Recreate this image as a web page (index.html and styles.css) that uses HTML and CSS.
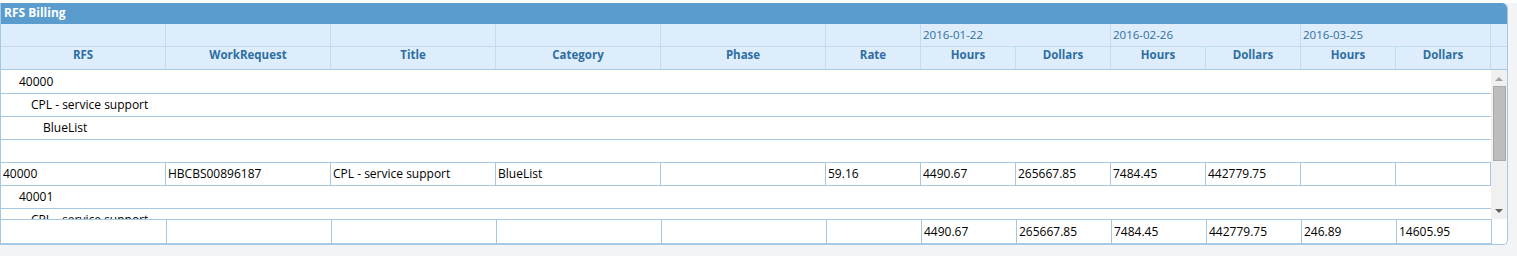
FILE: index.html
```html
<!DOCTYPE html>
<html>
<head>
<meta charset="utf-8">
<link rel="stylesheet" href="styles.css">
</head>
<body>
<div class="topstrip"></div>
<div class="panel">
  <div class="title">RFS Billing</div>
  <div class="head">
    <div class="hrow">
      <div class="hc"></div><div class="hc"></div><div class="hc"></div><div class="hc"></div><div class="hc"></div><div class="hc"></div>
      <div class="hc date span2">2016-01-22</div>
      <div class="hc date span2">2016-02-26</div>
      <div class="hc date span2">2016-03-25</div>
      <div class="hc filler"></div>
    </div>
    <div class="hrow">
      <div class="hc lbl">RFS</div><div class="hc lbl">WorkRequest</div><div class="hc lbl">Title</div><div class="hc lbl">Category</div><div class="hc lbl">Phase</div><div class="hc lbl">Rate</div>
      <div class="hc lbl">Hours</div><div class="hc lbl">Dollars</div>
      <div class="hc lbl">Hours</div><div class="hc lbl">Dollars</div>
      <div class="hc lbl">Hours</div><div class="hc lbl">Dollars</div>
      <div class="hc filler"></div>
    </div>
  </div>
  <div class="bodywrap">
    <div class="viewport">
      <div class="grp l1">40000</div>
      <div class="grp l2">CPL - service support</div>
      <div class="grp l3">BlueList</div>
      <div class="grp"></div>
      <div class="drow">
        <div class="dc">40000</div><div class="dc">HBCBS00896187</div><div class="dc">CPL - service support</div><div class="dc">BlueList</div><div class="dc"></div><div class="dc">59.16</div>
        <div class="dc">4490.67</div><div class="dc">265667.85</div><div class="dc">7484.45</div><div class="dc">442779.75</div><div class="dc"></div><div class="dc"></div>
      </div>
      <div class="grp l1">40001</div>
      <div class="grp l2">CPL - service support</div>
    </div>
    <div class="scrollbar">
      <div class="arrow up"></div>
      <div class="thumb"></div>
      <div class="track"></div>
      <div class="arrow down"></div>
    </div>
  </div>
  <div class="foot">
    <div class="fc"></div><div class="fc"></div><div class="fc"></div><div class="fc"></div><div class="fc"></div><div class="fc"></div>
    <div class="fc">4490.67</div><div class="fc">265667.85</div><div class="fc">7484.45</div><div class="fc">442779.75</div><div class="fc">246.89</div><div class="fc">14605.95</div>
  </div>
</div>
</body>
</html>
```
FILE: styles.css
```css
html, body {
  margin: 0;
  padding: 0;
}
body {
  background: #f3f4f6;
  font-family: "Open Sans", "Noto Sans", sans-serif;
  font-size: 12px;
  font-weight: 500;
  color: #000;
}
.topstrip {
  height: 3px;
  background: #ffffff;
}
.panel {
  width: 1506px;
  border: 1px solid #a6c8e3;
  border-top: none;
  border-radius: 0 5px 5px 0;
  background: #ffffff;
  overflow: hidden;
}
.title {
  height: 21px;
  line-height: 20px;
  background: #5b9cce;
  color: #ffffff;
  font-weight: 700;
  font-size: 12px;
  padding-left: 3px;
  border-radius: 0 5px 0 0;
}
.head {
  background: #ddedfb;
  font-size: 11.5px;
}
.hrow {
  display: grid;
  grid-template-columns: repeat(5, 165px) repeat(7, 95px) 16px;
  border-bottom: 1px solid #c3dbef;
}
.hrow:last-child {
  border-bottom-color: #a6c8e3;
}
.hc {
  height: 22px;
  line-height: 22px;
  border-right: 1px solid #c3dbef;
  color: #2f6da3;
  box-sizing: border-box;
  overflow: hidden;
  white-space: nowrap;
}
.hc.span2 {
  grid-column: span 2;
}
.hc.date {
  font-weight: 400;
  padding-left: 2px;
}
.hc.lbl {
  text-align: center;
  font-weight: 700;
  line-height: 16px;
}
.hc.filler {
  border-right: none;
}
.bodywrap {
  display: flex;
  height: 149px;
}
.viewport {
  width: 1490px;
  overflow: hidden;
  padding-top: 1px;
  box-sizing: border-box;
}
.grp {
  height: 22px;
  line-height: 21px;
  border-bottom: 1px solid #a6c8e3;
  white-space: nowrap;
}
.grp.l1 { padding-left: 18px; }
.grp.l2 { padding-left: 30px; }
.grp.l3 { padding-left: 42px; }
.drow {
  display: grid;
  grid-template-columns: repeat(5, 165px) repeat(7, 95px);
  border-bottom: 1px solid #a6c8e3;
}
.dc, .fc {
  height: 22px;
  line-height: 22px;
  padding-left: 2px;
  border-right: 1px solid #a6c8e3;
  box-sizing: border-box;
  white-space: nowrap;
  overflow: hidden;
}
.scrollbar {
  width: 16px;
  background: #f0f0f0;
  display: flex;
  flex-direction: column;
  align-items: center;
}
.arrow {
  width: 0;
  height: 0;
  border-left: 4px solid transparent;
  border-right: 4px solid transparent;
}
.arrow.up {
  margin-top: 7px;
  border-bottom: 4px solid #a3a3a3;
}
.arrow.down {
  margin-bottom: 6px;
  border-top: 4px solid #606060;
}
.thumb {
  margin-top: 5px;
  width: 13px;
  height: 75px;
  background: #bdbdbd;
  border: 1px solid #a9a9a9;
  box-sizing: border-box;
}
.track {
  flex: 1;
}
.foot {
  display: grid;
  grid-template-columns: 166px repeat(4, 165px) repeat(7, 95px);
  width: 1491px;
  border-top: 1px solid #a6c8e3;
  border-bottom: 1px solid #a6c8e3;
}
.fc {
  height: 23px;
  line-height: 23px;
}
```
